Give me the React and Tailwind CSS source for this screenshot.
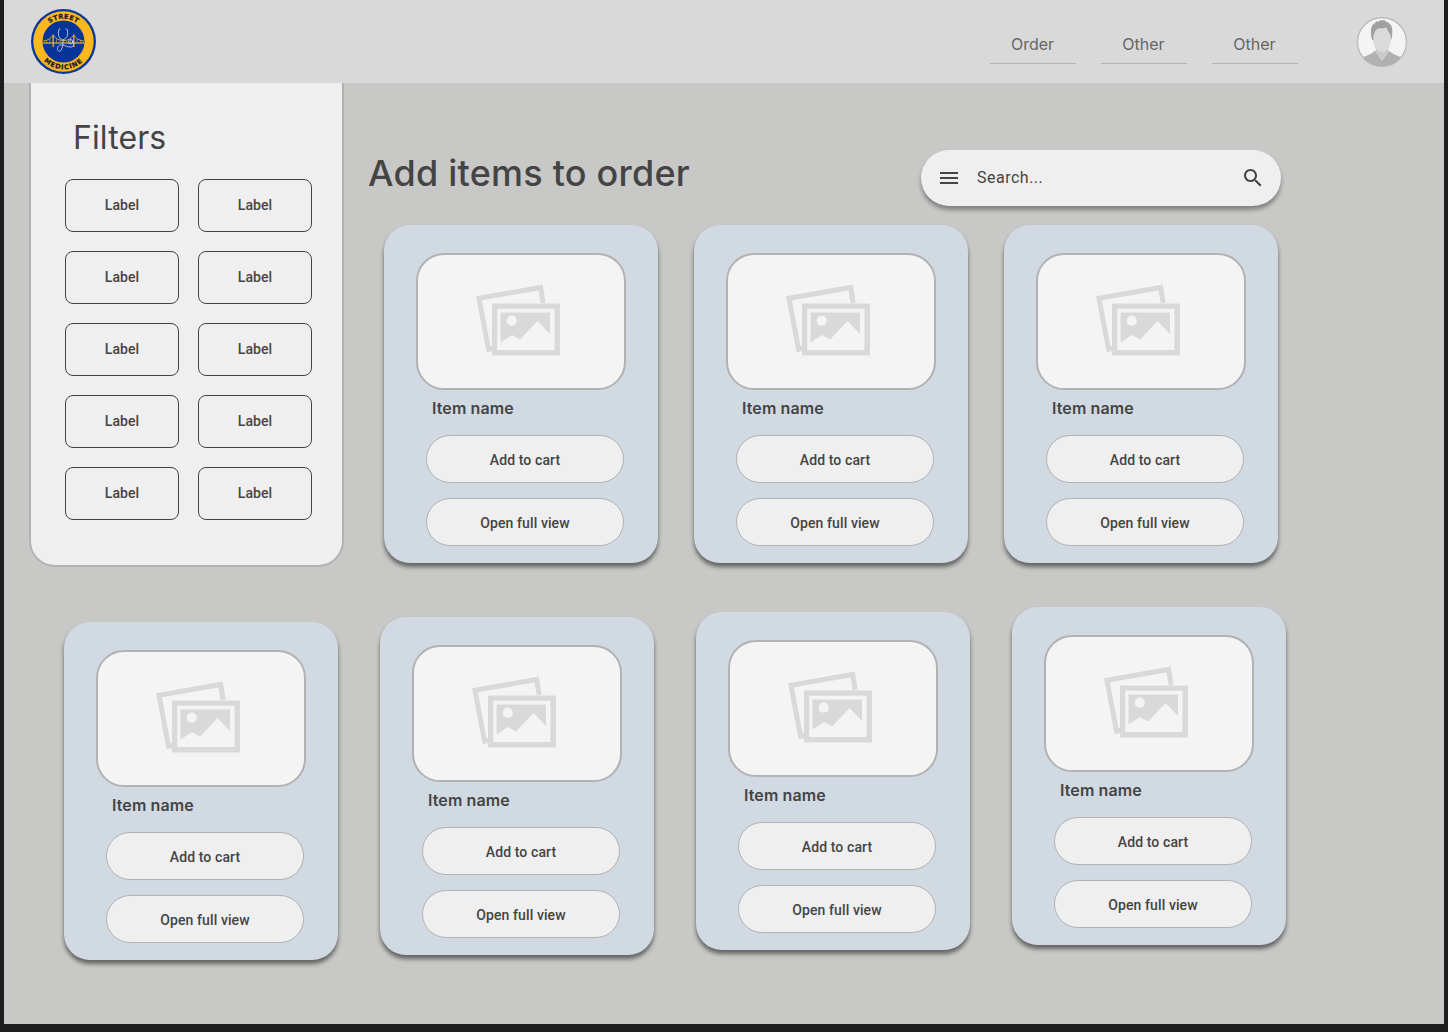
import React from "react";

const NAV = ["Order", "Other", "Other"];

function Logo() {
  return (
    <svg className="block h-[66px] w-[66px]" viewBox="-0.5 -0.5 66 66" role="img" aria-label="Street Medicine">
      <defs>
        <path id="logo-top" d="M10.2 33 A22.800 22.800 0 0 1 55.800 33" />
        <path id="logo-bottom" d="M5.200 33 A27.800 27.800 0 0 0 60.800 33" />
      </defs>
      <circle cx="33" cy="33" r="32.500" fill="#0a3799" />
      <circle cx="33" cy="33" r="30.200" fill="#fdb81e" />
      <circle cx="33" cy="33" r="21" fill="#06349a" />
      <g fill="none" stroke="#dcaa35">
        <path d="M12.400 34.500H53.600" strokeWidth="1.600" stroke="#c69d3c" />
        <path d="M12.800 32.500Q20 31.500 22.700 26.500Q26 31.800 33 32.200Q40 31.800 43.300 26.500Q46 31.500 53.200 32.500" strokeWidth="0.9" />
        <path d="M22.700 26V38.500M43.300 26V38.500" strokeWidth="1.400" />
        <path d="M16 32V34M19.300 30.500V34M26 30.500V34M29.500 32V34M36.500 32V34M40 30.500V34M46.600 30.500V34M50 32V34" strokeWidth="0.6" />
      </g>
      <g fill="none" stroke="#cfdaf0" strokeWidth="0.8" strokeLinecap="round">
        <path d="M29.600 20.500L28.300 20.900Q26.500 30 32.200 31.400Q38.600 30 36.800 20.900L35.500 20.500" />
        <path d="M32.500 31.400V36.500C31.500 38.500 31.500 42.500 28.800 42.800C26 42.500 26.600 38 29 36.800C32 35.300 36 38.700 40.500 38.600C43.500 38.300 44 34.500 42.400 32.800" />
        <circle cx="40.200" cy="33.300" r="2.200" />
      </g>
      <g fill="#171a22" stroke="#171a22" strokeWidth="0.25" fontFamily="'DejaVu Sans', sans-serif" fontWeight="700" fontSize="6.600">
        <text letterSpacing="0.3">
          <textPath href="#logo-top" startOffset="50%" textAnchor="middle">STREET</textPath>
        </text>
        <text letterSpacing="0.9">
          <textPath href="#logo-bottom" startOffset="50%" textAnchor="middle">MEDICINE</textPath>
        </text>
      </g>
    </svg>
  );
}

function Avatar() {
  return (
    <svg className="block h-[50px] w-[50px]" viewBox="0 0 50 50" role="img" aria-label="Profile">
      <defs>
        <clipPath id="avatar-clip">
          <circle cx="25" cy="25" r="24.500" />
        </clipPath>
      </defs>
      <circle cx="25" cy="25" r="24.500" fill="#f4f4f4" />
      <g clipPath="url(#avatar-clip)">
        <path d="M5 40.500Q13.500 38 18 33.800L25 43.500L32 33.800Q36.500 38 45 40.500V50H5Z" fill="#b1b1b1" />
        <path d="M18.700 30V34.500L24.800 43.300L31.300 34.500V30Z" fill="#c9c9c9" />
        <path d="M16.300 12Q25 6 33.800 12V21Q34.400 28 30.500 32.400Q25 37.600 19.500 32.400Q15.700 28 16.300 21Z" fill="#dadada" />
        <path d="M15.300 23.200Q13.600 19 14 13.500Q14.300 7.500 18.500 5.700L19.200 4.300L21.300 4.800L23.600 3L25.500 3.600L27 2.700L28.700 4.500Q34 6 35 11Q36 18 34 23.300L33.400 17.500L31.400 14.800L29.600 10.400Q25 11.800 20.800 11.400Q17.600 13.500 16.700 17.500L16.300 23Z" fill="#a0a0a0" />
      </g>
      <circle cx="25" cy="25" r="24.400" fill="none" stroke="#b3b3b3" strokeWidth="1.100" />
    </svg>
  );
}

function PicturesIcon() {
  return (
    <svg className="mr-[6px] mb-[3px] block h-[72px] w-[86px]" viewBox="0 0 86 72" aria-hidden="true">
      <path d="M68.200 19L65.600 3.500L4 14.200L13.500 65.200L18 64.200" fill="none" stroke="#d9d9d9" strokeWidth="5" />
      <rect x="17" y="19.500" width="68" height="52" fill="#d9d9d9" />
      <rect x="22.200" y="24.700" width="57.300" height="41.300" fill="#f4f4f4" />
      <path d="M25.500 28.500H75V50L62.500 37L45 55.500L37 51L25.500 58.500Z" fill="#d9d9d9" />
      <circle cx="36.700" cy="36.700" r="5.100" fill="#f4f4f4" />
    </svg>
  );
}

function CardButton({ children }) {
  return (
    <button className="flex h-[48px] w-[198px] items-center justify-center rounded-full border border-[#b2b2b2] bg-[#efefef] pt-[2px] font-[Roboto,sans-serif] text-[14px] leading-5 font-medium tracking-[0.1px] text-[#444]">
      {children}
    </button>
  );
}

function ItemCard() {
  return (
    <article className="flex h-[338px] w-[274px] shrink-0 flex-col rounded-[26px] bg-[#d1d9e2] pt-[27.500px] pl-[32px] shadow-[0_4px_4px_rgba(0,0,0,0.5)]">
      <div className="flex h-[137.500px] w-[210px] items-center justify-center rounded-[28px] border-2 border-[#b2b2b2] bg-[#f4f4f4]">
        <PicturesIcon />
      </div>
      <h2 className="mt-[6px] ml-[16px] text-[16px] leading-6 font-semibold tracking-[0.1px] text-[#444]">Item name</h2>
      <div className="mt-[15px] ml-[10px] flex flex-col gap-[15px]">
        <CardButton>Add to cart</CardButton>
        <CardButton>Open full view</CardButton>
      </div>
    </article>
  );
}

function Filters() {
  return (
    <aside className="h-[484px] w-[315px] shrink-0 rounded-b-[26px] border-2 border-t-0 border-[#b2b2b2] bg-[#efefef] px-[34px] pt-[35px]">
      <h2 className="pl-[8px] text-[32px] leading-[40px] font-normal tracking-[0.1px] text-[#444]">Filters</h2>
      <div className="mt-[21px] grid grid-cols-[114px_114px] gap-[19px]">
        {Array.from({ length: 10 }, (_, i) => (
          <button
            key={i}
            className="flex h-[53px] items-center justify-center rounded-lg border border-[#444] pb-px font-[Roboto,sans-serif] text-[14px] leading-5 font-medium tracking-[0.1px] text-[#444]"
          >
            Label
          </button>
        ))}
      </div>
    </aside>
  );
}

function SearchBar() {
  return (
    <div className="flex h-[56px] w-[360px] items-center rounded-full bg-[#efefef] pr-[16px] pl-[16px] text-[#444] shadow-[0_4px_4px_rgba(0,0,0,0.35)]">
      <svg className="h-6 w-6" viewBox="0 0 24 24" fill="currentColor" aria-hidden="true">
        <path d="M3 18h18v-2H3v2zm0-5h18v-2H3v2zm0-7v2h18V6H3z" />
      </svg>
      <span className="ml-[16px] flex-1 font-[Roboto,sans-serif] text-[16px] leading-6 tracking-[0.5px]">Search...</span>
      <svg className="h-6 w-6" viewBox="0 0 24 24" fill="currentColor" aria-hidden="true">
        <path d="M15.500 14h-.79l-.28-.27C15.410 12.590 16 11.110 16 9.500 16 5.910 13.090 3 9.500 3S3 5.910 3 9.500 5.910 16 9.500 16c1.610 0 3.090-.59 4.230-1.570l.27.28v.79l5 4.990L20.490 19l-4.990-5zm-6 0C7.010 14 5 11.990 5 9.500S7.010 5 9.500 5 14 7.010 14 9.500 11.990 14 9.500 14z" />
      </svg>
    </div>
  );
}

export default function App() {
  return (
    <div className="h-[1032px] w-[1448px] overflow-hidden bg-[#1e1e1e] px-1 pb-2 font-[Inter,sans-serif]">
      <div className="h-[1024px] w-[1440px] overflow-hidden bg-[#c8c8c6]">
        <header className="flex h-[83px] items-start bg-[#d9d9d9] pr-[37px] pl-[26px]">
          <div className="mt-[8px]">
            <Logo />
          </div>
          <nav className="ml-auto flex gap-[25px] pt-[32px]">
            {NAV.map((name, i) => (
              <a key={i} className="flex h-[32px] w-[86px] justify-center border-b border-[#b2b2b2] pr-px text-[16px] leading-6 text-[#666]">
                {name}
              </a>
            ))}
          </nav>
          <div className="mt-[17px] ml-[59px]">
            <Avatar />
          </div>
        </header>

        <div className="flex pl-[25px]">
          <Filters />
          <main className="pt-[67px]">
            <div className="flex h-[56px] justify-between pl-[24px]">
              <h1 className="pt-px text-[36px] leading-[44px] font-medium tracking-[0.22px] whitespace-nowrap text-[#444]">Add items to order</h1>
              <SearchBar />
            </div>
            <div className="mt-[19px] flex gap-[36px] pr-[3px] pl-[40px]">
              <ItemCard />
              <ItemCard />
              <ItemCard />
            </div>
          </main>
        </div>

        <div className="mt-[40px] flex gap-[42px] pl-[60px]">
          <div className="pt-[15px]"><ItemCard /></div>
          <div className="pt-[10px]"><ItemCard /></div>
          <div className="pt-[5px]"><ItemCard /></div>
          <div><ItemCard /></div>
        </div>
      </div>
    </div>
  );
}
